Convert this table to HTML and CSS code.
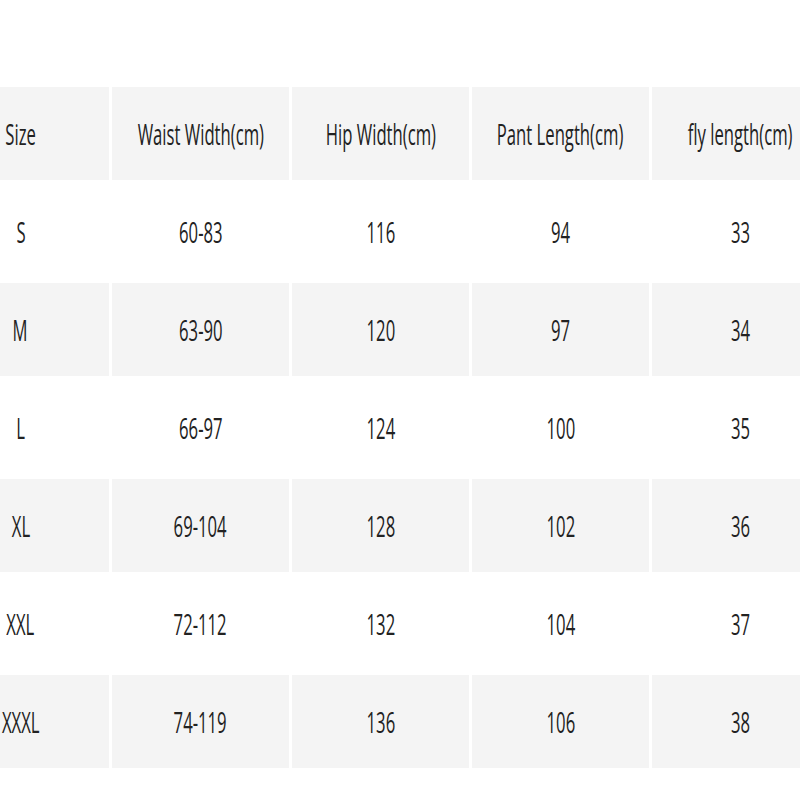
FILE: index.html
```html
<!DOCTYPE html>
<html>
<head>
<meta charset="utf-8">
<link rel="stylesheet" href="styles.css">
</head>
<body>
<div class="chart">
  <div class="cell alt"><span class="t">Size</span></div>
  <div class="cell alt"><span class="t">Waist Width(cm)</span></div>
  <div class="cell alt"><span class="t">Hip Width(cm)</span></div>
  <div class="cell alt"><span class="t">Pant Length(cm)</span></div>
  <div class="cell alt"><span class="t">fly length(cm)</span></div>

  <div class="cell"><span class="t">S</span></div>
  <div class="cell"><span class="t">60-83</span></div>
  <div class="cell"><span class="t">116</span></div>
  <div class="cell"><span class="t">94</span></div>
  <div class="cell"><span class="t">33</span></div>

  <div class="cell alt"><span class="t">M</span></div>
  <div class="cell alt"><span class="t">63-90</span></div>
  <div class="cell alt"><span class="t">120</span></div>
  <div class="cell alt"><span class="t">97</span></div>
  <div class="cell alt"><span class="t">34</span></div>

  <div class="cell"><span class="t">L</span></div>
  <div class="cell"><span class="t">66-97</span></div>
  <div class="cell"><span class="t">124</span></div>
  <div class="cell"><span class="t">100</span></div>
  <div class="cell"><span class="t">35</span></div>

  <div class="cell alt"><span class="t">XL</span></div>
  <div class="cell alt"><span class="t">69-104</span></div>
  <div class="cell alt"><span class="t">128</span></div>
  <div class="cell alt"><span class="t">102</span></div>
  <div class="cell alt"><span class="t">36</span></div>

  <div class="cell"><span class="t">XXL</span></div>
  <div class="cell"><span class="t">72-112</span></div>
  <div class="cell"><span class="t">132</span></div>
  <div class="cell"><span class="t">104</span></div>
  <div class="cell"><span class="t">37</span></div>

  <div class="cell alt"><span class="t">XXXL</span></div>
  <div class="cell alt"><span class="t">74-119</span></div>
  <div class="cell alt"><span class="t">136</span></div>
  <div class="cell alt"><span class="t">106</span></div>
  <div class="cell alt"><span class="t">38</span></div>
</div>
</body>
</html>
```

FILE: styles.css
```css
html, body {
  margin: 0;
  padding: 0;
  background: #ffffff;
  overflow: hidden;
}

body {
  width: 800px;
  height: 800px;
  font-family: "Open Sans", "Liberation Sans", sans-serif;
  color: #222222;
}

.chart {
  display: grid;
  grid-template-columns: repeat(5, 177px);
  grid-auto-rows: 93px;
  gap: 5px 3px;
  margin-top: 87px;
  margin-left: -68px;
  width: 897px;
}

.cell {
  display: flex;
  align-items: center;
  justify-content: center;
  background: #ffffff;
  overflow: visible;
}

.cell.alt {
  background: #f4f4f4;
}

.t {
  display: inline-block;
  flex: none;
  white-space: nowrap;
  font-size: 29px;
  line-height: 1;
  transform: scaleX(0.575);
  transform-origin: center;
}
```
